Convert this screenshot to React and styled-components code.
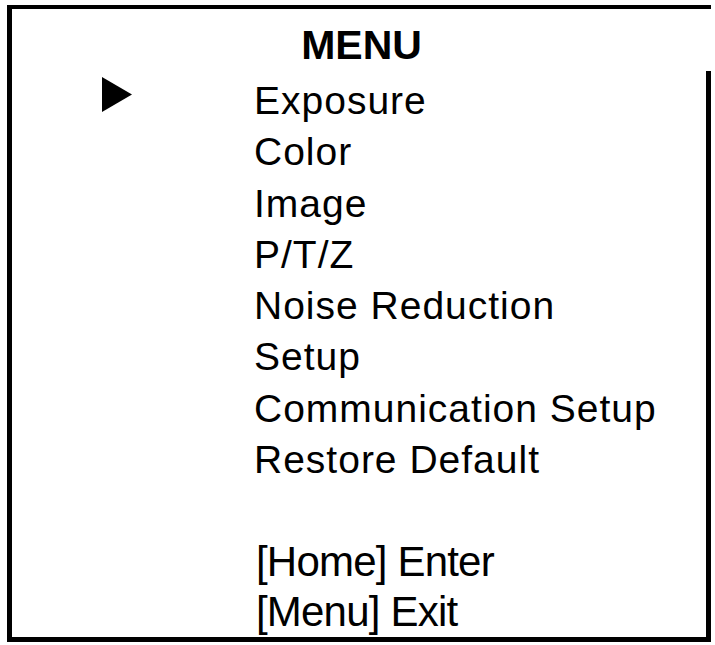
import React from 'react';
import styled, { createGlobalStyle } from 'styled-components';

const GlobalStyle = createGlobalStyle`
  html, body {
    margin: 0;
    padding: 0;
    background: #ffffff;
  }
  body {
    font-family: "Liberation Sans", Arial, sans-serif;
    color: #000000;
  }
`;

// the right edge of the frame only starts ~62px below the top border
const Frame = styled.div`
  box-sizing: border-box;
  width: 704px;
  height: 637px;
  margin: 5px 0 0 7px;
  border: 5px solid #000;
  border-top-width: 4px;
  border-right: none;
  background: linear-gradient(#000, #000) right bottom / 5px calc(100% - 62px) no-repeat;
  padding-top: 12px;
`;

const Title = styled.h1`
  margin: 0 0 6px;
  font-size: 41px;
  line-height: 48px;
  font-weight: 700;
  text-align: center;
`;

const ItemList = styled.ul`
  list-style: none;
  margin: 0;
  padding: 0;
`;

const Row = styled.li`
  display: grid;
  grid-template-columns: 242px 1fr;
  height: 51.3px;
`;

const Marker = styled.div`
  padding: 2px 0 0 90px;
`;

const Label = styled.span`
  font-size: 39px;
  line-height: 51.3px;
  letter-spacing: 1px;
  white-space: nowrap;
`;

const Hints = styled.div`
  margin: 52px 0 0 244px;
`;

const Hint = styled.div`
  font-size: 42px;
  line-height: 50px;
  letter-spacing: -0.8px;
  white-space: nowrap;
`;

const Pointer = () => (
  <svg width="30" height="35" viewBox="0 0 30 35">
    <polygon points="0,0 30,17.5 0,35" fill="#000" />
  </svg>
);

const items = [
  'Exposure',
  'Color',
  'Image',
  'P/T/Z',
  'Noise Reduction',
  'Setup',
  'Communication Setup',
  'Restore Default',
];

const App = () => {
  const selected = 0;

  return (
    <>
      <GlobalStyle />
      <Frame>
        <Title>MENU</Title>
        <ItemList>
          {items.map((item, i) => (
            <Row key={item}>
              <Marker>{i === selected && <Pointer />}</Marker>
              <Label>{item}</Label>
            </Row>
          ))}
        </ItemList>
        <Hints>
          <Hint>[Home] Enter</Hint>
          <Hint>[Menu] Exit</Hint>
        </Hints>
      </Frame>
    </>
  );
};

export default App;
